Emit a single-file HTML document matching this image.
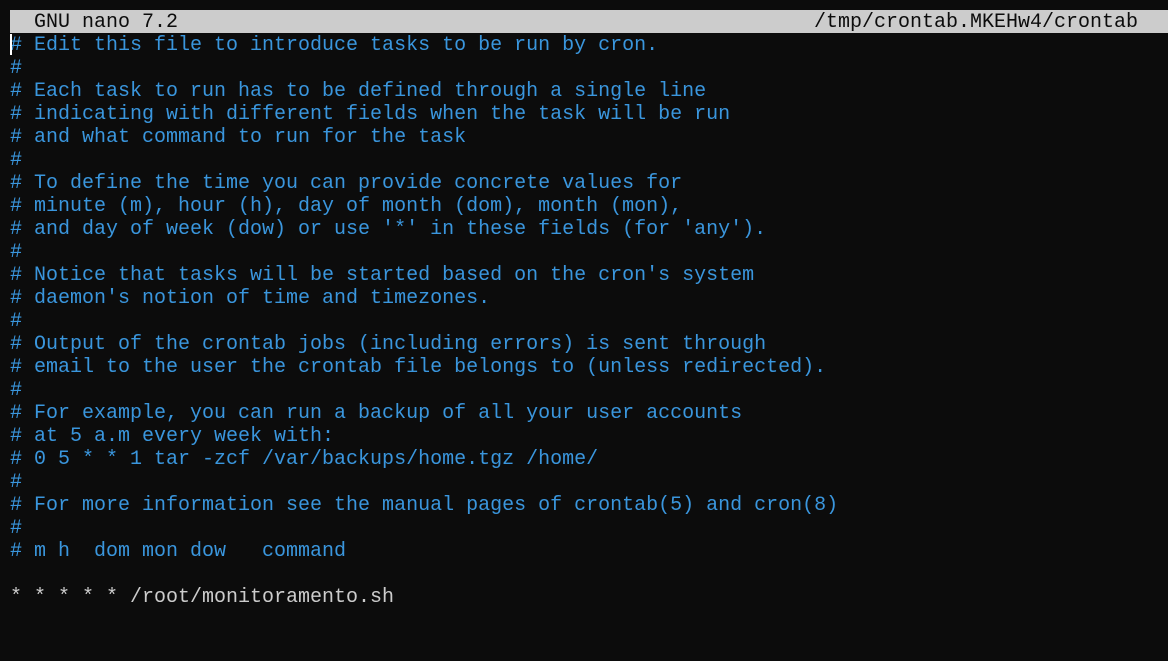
<!DOCTYPE html>
<html><head><style>
body{margin:0;background:#0c0c0c;width:1168px;height:661px;overflow:hidden;font-family:"Liberation Mono",monospace;font-size:20px;}
.bar{position:absolute;left:10px;top:10px;width:1158px;height:23px;background:#cccccc;color:#0c0c0c;}
.bar span{position:absolute;top:1px;line-height:23px;white-space:pre;}
pre{position:absolute;left:10px;top:34px;margin:0;font:inherit;line-height:23px;color:#3a96dd;white-space:pre;}
.w{color:#cccccc;}
.cur{position:absolute;left:10px;top:34px;width:2px;height:21px;background:#fff;}
</style></head><body>
<div class="bar"><span style="left:24px">GNU nano 7.2</span><span style="left:804px">/tmp/crontab.MKEHw4/crontab</span></div>
<pre># Edit this file to introduce tasks to be run by cron.
#
# Each task to run has to be defined through a single line
# indicating with different fields when the task will be run
# and what command to run for the task
#
# To define the time you can provide concrete values for
# minute (m), hour (h), day of month (dom), month (mon),
# and day of week (dow) or use '*' in these fields (for 'any').
#
# Notice that tasks will be started based on the cron's system
# daemon's notion of time and timezones.
#
# Output of the crontab jobs (including errors) is sent through
# email to the user the crontab file belongs to (unless redirected).
#
# For example, you can run a backup of all your user accounts
# at 5 a.m every week with:
# 0 5 * * 1 tar -zcf /var/backups/home.tgz /home/
#
# For more information see the manual pages of crontab(5) and cron(8)
#
# m h  dom mon dow   command

<span class="w">* * * * * /root/monitoramento.sh</span></pre>
<div class="cur"></div>
</body></html>
